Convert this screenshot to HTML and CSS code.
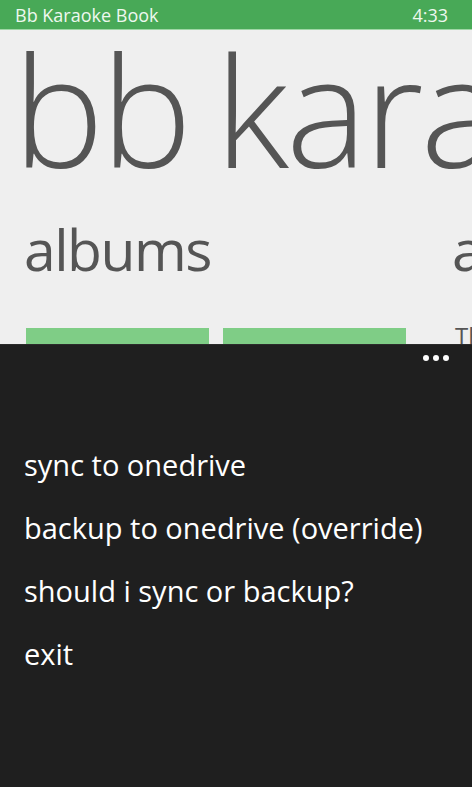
FILE: index.html
```html
<!DOCTYPE html>
<html>
<head>
<meta charset="utf-8">
<link rel="stylesheet" href="styles.css">
</head>
<body>
<div class="phone">
  <header class="status">
    <span class="status-title">Bb Karaoke Book</span>
    <span class="status-time">4:33</span>
  </header>
  <main class="pano">
    <div class="pano-title">bb karaoke book</div>
    <div class="pano-items">
      <section class="pano-item">
        <h2 class="item-header">albums</h2>
        <div class="tiles">
          <div class="tile"></div>
          <div class="tile"></div>
        </div>
      </section>
      <section class="pano-item next">
        <h2 class="item-header">artists</h2>
        <p class="item-text">The</p>
      </section>
    </div>
  </main>
  <nav class="appbar">
    <div class="appbar-top">
      <span class="dots"><i></i><i></i><i></i></span>
    </div>
    <ul class="menu">
      <li>sync to onedrive</li>
      <li>backup to onedrive (override)</li>
      <li>should i sync or backup?</li>
      <li>exit</li>
    </ul>
  </nav>
</div>
</body>
</html>
```

FILE: styles.css
```css
* { box-sizing: border-box; }
html, body { margin: 0; padding: 0; }
body {
  width: 472px;
  height: 787px;
  overflow: hidden;
  font-family: "Open Sans", "Noto Sans", sans-serif;
  background: #1f1f1f;
}
.phone {
  width: 472px;
  height: 787px;
  display: flex;
  flex-direction: column;
  overflow: hidden;
}
.status {
  height: 30px;
  flex: none;
  background: #48a957;
  border-bottom: 1px solid #9fd7a6;
  color: #eef8ef;
  display: flex;
  align-items: center;
  justify-content: space-between;
  padding: 0 24px 0 15px;
  font-size: 18px;
  line-height: 1;
}
.pano {
  height: 314px;
  flex: none;
  background: #efefef;
  overflow: hidden;
  color: #555;
}
.pano-title {
  font-weight: 300;
  font-size: 153px;
  line-height: 1;
  white-space: nowrap;
  margin: 2px 0 0 13px;
  letter-spacing: -3px;
  word-spacing: -11px;
}
.pano-items {
  display: flex;
  margin-top: 36px;
  padding-left: 24px;
  width: 1200px;
}
.pano-item { width: 428px; flex: none; }
.item-header {
  margin: 0;
  font-weight: 400;
  font-size: 57px;
  line-height: 1;
  letter-spacing: -1.5px;
  white-space: nowrap;
}
.tiles {
  display: flex;
  gap: 14px;
  margin-top: 50px;
  padding-left: 2px;
}
.tile {
  width: 183px;
  height: 183px;
  background: #7fcd86;
}
.item-text {
  margin: 46px 0 0 3px;
  font-size: 24px;
  line-height: 1;
}
.appbar {
  flex: 1;
  background: #1f1f1f;
  border-top: 1px solid #2b2b2b;
  color: #fff;
}
.appbar-top {
  display: flex;
  justify-content: flex-end;
  padding: 10px 23px 0 0;
  height: 36px;
}
.dots { display: flex; gap: 4px; }
.dots i {
  width: 6px;
  height: 6px;
  border-radius: 50%;
  background: #fff;
  display: block;
}
.menu {
  list-style: none;
  margin: 0;
  padding: 52px 0 0 24px;
}
.menu li {
  font-size: 29px;
  line-height: 63px;
  height: 63px;
  white-space: nowrap;
  letter-spacing: 0;
}
```
